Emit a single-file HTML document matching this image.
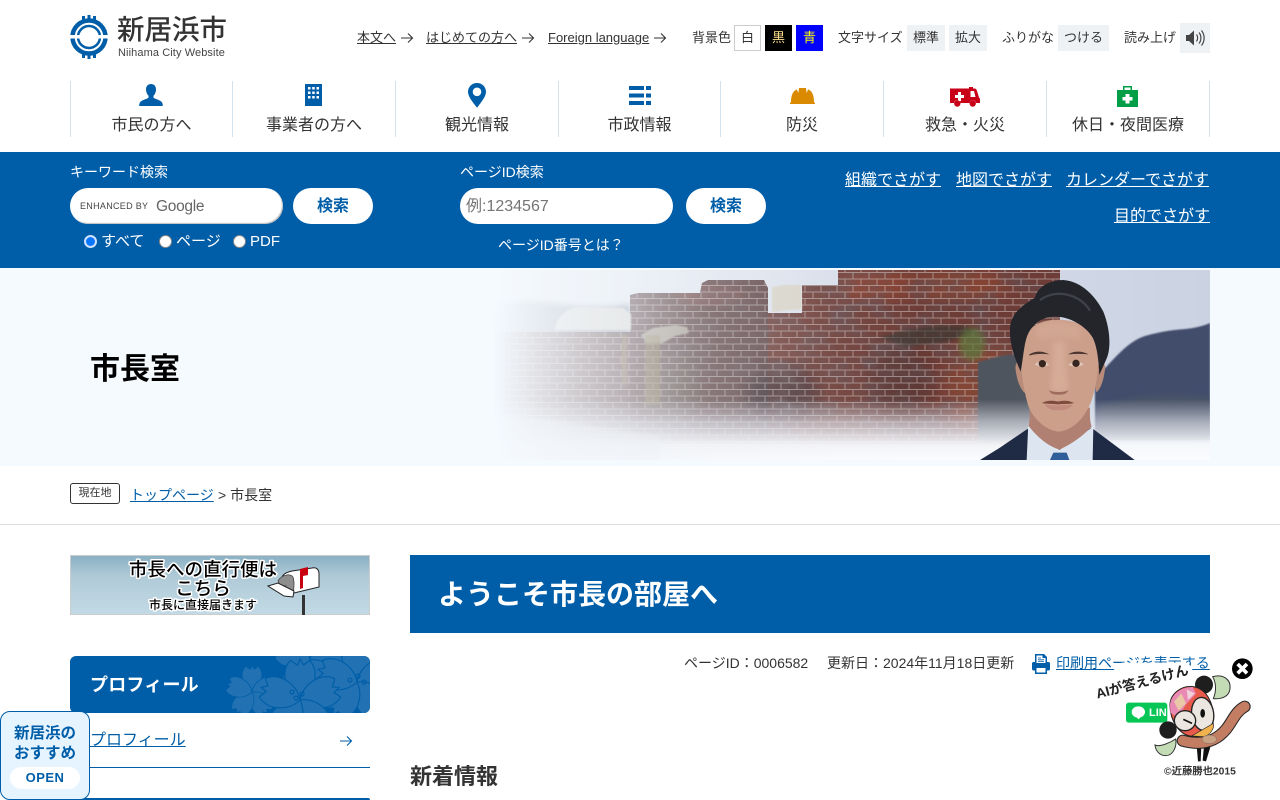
<!DOCTYPE html>
<html lang="ja"><head><meta charset="utf-8"><title>市長室 | 新居浜市</title>
<style>
html,body{margin:0;padding:0;background:#fff}
body{width:1280px;height:800px;overflow:hidden;position:relative;font-family:"Liberation Sans","Noto Sans CJK JP",sans-serif;color:#333}
.a{position:absolute}
.t{position:absolute;white-space:nowrap;line-height:1}
a{color:inherit}
.sep{position:absolute;top:81px;height:56px;width:1px;background:#d3e1ec}
.nav{position:absolute;top:117px;font-size:16px;line-height:18px;text-align:center;white-space:nowrap;color:#333}
.box{position:absolute;top:25px;height:26px;line-height:26px;text-align:center;font-size:13px;background:#eff2f5;color:#333}
.pill{position:absolute;background:#fff;border-radius:18px}
.btn{position:absolute;top:188px;height:36px;line-height:38px;width:80px;background:#fff;border-radius:18px;text-align:center;font-weight:bold;font-size:16px;color:#005ea8}
.radio{position:absolute;top:235px;width:13px;height:13px;border-radius:50%;background:#fff;box-sizing:border-box;border:1px solid #888}
svg{display:block}
</style></head><body>

<svg class="a" style="left:70px;top:15px" width="38" height="44" viewBox="0 0 38 44">
<circle cx="19" cy="22" r="16.500" fill="none" stroke="#005ea8" stroke-width="4.500"/>
<circle cx="19" cy="22" r="11" fill="none" stroke="#005ea8" stroke-width="2.500"/>
<path d="M12 1h3v6h-3zM17.500 0h3v7h-3zM23 1h3v6h-3zM12 37h3v6h-3zM17.500 37h3v7h-3zM23 37h3v6h-3z" fill="#005ea8"/>
<path d="M0 20h10v3.500H0zM28 20h10v3.500H28z" fill="#fff"/>
</svg>
<div class="t" style="left:117px;top:16px;font-size:27.500px;font-weight:500;color:#333">新居浜市</div>
<div class="t" style="left:118px;top:48px;font-size:11px;color:#444;letter-spacing:.1px">Niihama City Website</div>

<div class="t" style="left:357px;top:31px;font-size:13px"><a href="#">本文へ</a></div>
<svg class="a" style="left:401px;top:32px" width="13" height="12" viewBox="0 0 13 12"><path d="M0 6h11.500M7 1.500 11.500 6 7 10.500" fill="none" stroke="#333" stroke-width="1.100"/></svg>
<div class="t" style="left:426px;top:31px;font-size:13px"><a href="#">はじめての方へ</a></div>
<svg class="a" style="left:522px;top:32px" width="13" height="12" viewBox="0 0 13 12"><path d="M0 6h11.500M7 1.500 11.500 6 7 10.500" fill="none" stroke="#333" stroke-width="1.100"/></svg>
<div class="t" style="left:548px;top:31px;font-size:13px"><a href="#">Foreign language</a></div>
<svg class="a" style="left:654px;top:32px" width="13" height="12" viewBox="0 0 13 12"><path d="M0 6h11.500M7 1.500 11.500 6 7 10.500" fill="none" stroke="#333" stroke-width="1.100"/></svg>

<div class="t" style="left:692px;top:31px;font-size:13px">背景色</div>
<div class="box" style="left:734px;width:25px;height:24px;line-height:24px;background:#fff;border:1px solid #ccc">白</div>
<div class="box" style="left:765px;width:27px;background:#000;color:#ffe08a">黒</div>
<div class="box" style="left:796px;width:27px;background:#00f;color:#ff0">青</div>
<div class="t" style="left:838px;top:31px;font-size:13px">文字サイズ</div>
<div class="box" style="left:907px;width:38px">標準</div>
<div class="box" style="left:949px;width:38px">拡大</div>
<div class="t" style="left:1002px;top:31px;font-size:13px">ふりがな</div>
<div class="box" style="left:1058px;width:51px">つける</div>
<div class="t" style="left:1124px;top:31px;font-size:13px">読み上げ</div>
<div class="a" style="left:1180px;top:23px;width:30px;height:30px;background:#eff2f5"></div>
<svg class="a" style="left:1185px;top:28px" width="20" height="20" viewBox="0 0 20 20"><path d="M1 7h3l5-4.500v15L4 13H1z" fill="#444"/><path d="M11.500 6.500c1.500 2 1.500 5 0 7M14 4.500c2.500 3 2.500 8 0 11M16.500 2.500c3.500 4.500 3.500 10.500 0 15" fill="none" stroke="#444" stroke-width="1.200"/></svg>

<div class="sep" style="left:70px"></div><div class="sep" style="left:232px"></div><div class="sep" style="left:395px"></div><div class="sep" style="left:558px"></div><div class="sep" style="left:720px"></div><div class="sep" style="left:883px"></div><div class="sep" style="left:1046px"></div><div class="sep" style="left:1209px"></div>

<svg class="a" style="left:139px;top:84px" width="24" height="22" viewBox="0 0 24 22"><path d="M12 0c3.500 0 5 2.600 5 5.500 0 2.500-1 4.800-2.500 6.200v1.800c0 1 5.200 2 8 4.200.9.800 1.300 2.300 1.300 4.300H.2c0-2 .4-3.500 1.300-4.300 2.800-2.200 8-3.200 8-4.200v-1.800C8 10.300 7 8 7 5.500 7 2.600 8.500 0 12 0z" fill="#005ea8"/></svg>
<svg class="a" style="left:305px;top:84px" width="17" height="22" viewBox="0 0 17 22"><path fill-rule="evenodd" d="M0 0h17v22H0zM3 3v2.500h2.500V3zM7.200 3v2.500h2.500V3zM11.500 3v2.500H14V3zM3 7.500V10h2.500V7.500zM7.200 7.500V10h2.500V7.500zM11.500 7.500V10H14V7.500zM3 12v2.500h2.500V12zM7.200 12v2.500h2.500V12zM11.500 12v2.500H14V12z" fill="#005ea8"/></svg>
<svg class="a" style="left:468px;top:83px" width="18" height="25" viewBox="0 0 18 25"><path fill-rule="evenodd" d="M9 0c5 0 9 3.900 9 8.800 0 5-5 10.700-9 16-4-5.300-9-11-9-16C0 3.900 4 0 9 0zm0 4.500a4.300 4.300 0 1 0 0 8.600 4.300 4.300 0 0 0 0-8.600z" fill="#005ea8"/></svg>
<svg class="a" style="left:629px;top:86px" width="22" height="19" viewBox="0 0 22 19"><path d="M0 0h15v4H0zM17 0h5v4h-5zM0 7.500h15v4H0zM17 7.500h5v4h-5zM0 15h15v4H0zM17 15h5v4h-5z" fill="#005ea8"/></svg>
<svg class="a" style="left:790px;top:88px" width="25" height="16" viewBox="0 0 25 16"><path d="M9 0h7l.6 5 1.600-3.600C22 3 24 7 24 14l1 1v1H0v-1l1-1C1 7 3 3 6.800 1.400L8.400 5z" fill="#d98a00"/></svg>
<svg class="a" style="left:950px;top:86px" width="30" height="21" viewBox="0 0 30 21"><path d="M0 2.500h19V1h4v1.500h1.500c1.500 0 2 1 2.500 2.500l2 6.500c.6.500 1 1.200 1 2V17h-4a3.300 3.300 0 0 0-6.500 0h-9A3.300 3.300 0 0 0 4 17H0z" fill="#c80018"/><path d="M20.500 5h3.500l1.500 6h-5z" fill="#fff"/><path d="M8 6h3v3h3v3h-3v3H8v-3H5V9h3z" fill="#fff"/><circle cx="7.300" cy="17.500" r="3.200" fill="#c80018"/><circle cx="22.700" cy="17.500" r="3.200" fill="#c80018"/></svg>
<svg class="a" style="left:1117px;top:86px" width="21" height="21" viewBox="0 0 21 21"><path fill-rule="evenodd" d="M6 4V0h9v4h6v17H0V4zM7.500 1.500V4h6V1.500z" fill="#009e47"/><path d="M8.500 8h4v3h3v3.500h-3v3h-4v-3h-3V11h3z" fill="#fff"/></svg>

<div class="nav" style="left:71px;width:161px">市民の方へ</div>
<div class="nav" style="left:233px;width:162px">事業者の方へ</div>
<div class="nav" style="left:396px;width:162px">観光情報</div>
<div class="nav" style="left:559px;width:161px">市政情報</div>
<div class="nav" style="left:721px;width:162px">防災</div>
<div class="nav" style="left:884px;width:162px">救急・火災</div>
<div class="nav" style="left:1047px;width:162px">休日・夜間医療</div>

<div class="a" style="left:0;top:152px;width:1280px;height:116px;background:#005ea8"></div>
<div class="t" style="left:70px;top:165px;font-size:14px;color:#fff">キーワード検索</div>
<div class="pill" style="left:70px;top:188px;width:213px;height:36px;box-shadow:inset -1px -1px 1px #bbb"></div>
<div class="t" style="left:80px;top:202px;font-size:9px;color:#444;letter-spacing:.3px">ENHANCED BY</div>
<div class="t" style="left:156px;top:199px;font-size:15.500px;color:#666;letter-spacing:-.3px">Google</div>
<div class="btn" style="left:293px">検索</div>
<div class="radio" style="left:84px;background:#fff;border:2px solid #cfe2ff"><div class="a" style="left:0;top:0;width:9px;height:9px;border-radius:50%;background:#0a75ff"></div></div>
<div class="t" style="left:101px;top:234px;font-size:15px;color:#fff">すべて</div>
<div class="radio" style="left:159px"></div>
<div class="t" style="left:176px;top:234px;font-size:15px;color:#fff">ページ</div>
<div class="radio" style="left:233px"></div>
<div class="t" style="left:250px;top:234px;font-size:15px;color:#fff">PDF</div>

<div class="t" style="left:460px;top:165px;font-size:14px;color:#fff">ページID検索</div>
<div class="pill" style="left:460px;top:188px;width:213px;height:36px"></div>
<div class="t" style="left:466px;top:199px;font-size:16px;color:#757575">例:1234567</div>
<div class="btn" style="left:686px">検索</div>
<div class="t" style="left:498px;top:238px;font-size:14px;color:#fff">ページID番号とは？</div>

<div class="t" style="left:845px;top:173px;font-size:16px;color:#fff"><a href="#">組織でさがす</a></div>
<div class="t" style="left:956px;top:173px;font-size:16px;color:#fff"><a href="#">地図でさがす</a></div>
<div class="t" style="left:1066px;top:173px;font-size:16px;color:#fff"><a href="#">カレンダーでさがす</a></div>
<div class="t" style="left:1114px;top:209px;font-size:16px;color:#fff"><a href="#">目的でさがす</a></div>

<div class="a" style="left:0;top:268px;width:1280px;height:198px;background:#f5faff"></div>
<svg class="a" style="left:380px;top:270px" width="830" height="190" viewBox="380 270 830 190">
<defs>
<linearGradient id="sky" x1="0" x2="1" y1="0" y2="0"><stop offset="0" stop-color="#f5faff"/><stop offset=".3" stop-color="#e9eef5"/><stop offset=".6" stop-color="#d5dbe8"/><stop offset="1" stop-color="#cbd3e3"/></linearGradient>
<pattern id="mt" width="16" height="13" patternUnits="userSpaceOnUse"><path d="M0 6h16M0 12.500h16M5 0v6M13 6v7" stroke="#cfc6c4" stroke-width="1" opacity=".55" fill="none"/></pattern>
<linearGradient id="fadeL" x1="0" x2="1" y1="0" y2="0"><stop offset="0" stop-color="#f5faff"/><stop offset=".135" stop-color="#f5faff"/><stop offset=".2" stop-color="#f3f7fb" stop-opacity=".85"/><stop offset=".3" stop-color="#f0f4f9" stop-opacity=".6"/><stop offset=".4" stop-color="#eef1f6" stop-opacity=".3"/><stop offset=".55" stop-color="#eef1f6" stop-opacity=".08"/><stop offset=".65" stop-color="#eef1f6" stop-opacity="0"/></linearGradient>
<linearGradient id="fadeB" x1="0" x2="0" y1="0" y2="1"><stop offset=".68" stop-color="#dfe2ec" stop-opacity="0"/><stop offset=".8" stop-color="#e3e6ef" stop-opacity=".62"/><stop offset=".92" stop-color="#f6f8fb" stop-opacity=".97"/><stop offset="1" stop-color="#fafcff"/></linearGradient>
<filter id="b3"><feGaussianBlur stdDeviation="3"/></filter>
<filter id="b8"><feGaussianBlur stdDeviation="9"/></filter>
<filter id="b1"><feGaussianBlur stdDeviation=".8"/></filter>
<filter id="b2"><feGaussianBlur stdDeviation="1.600"/></filter>
<filter id="nz" x="0" y="0" width="1" height="1"><feTurbulence type="fractalNoise" baseFrequency=".035 .05" numOctaves="4" seed="7"/><feColorMatrix values="0 0 0 0 .12  0 0 0 0 .08  0 0 0 0 .09  1.600 0 0 0 -.65"/></filter>
<clipPath id="wc"><path d="M490 460V332h140V295l8-2h62l2-10 6-3h56l4 8v25h34v-28h36v-15h222v190z"/></clipPath>
</defs>
<rect x="380" y="270" width="830" height="190" fill="url(#sky)"/>
<path d="M400 340c30-25 100-42 140-38 30 3 60 8 90 2v50H400z" fill="#9ea4b3" filter="url(#b3)"/>
<path d="M1095 440V378c14-12 30-36 50-42 18-5 28-6 40-7 10-1 18-3 25-6v117z" fill="#434d6c" filter="url(#b1)"/>
<path d="M1100 440v-34c30-10 70-14 110-8v42z" fill="#4f5a66" opacity=".6" filter="url(#b3)"/>
<g clip-path="url(#wc)">
<rect x="490" y="330" width="140" height="130" fill="#64484a"/>
<rect x="630" y="275" width="138" height="185" fill="#5c4243"/>
<rect x="768" y="270" width="300" height="190" fill="#6e3c36"/>
<ellipse cx="670" cy="385" rx="26" ry="35" fill="#5b5a4e" opacity=".5" filter="url(#b8)"/>
<ellipse cx="782" cy="395" rx="36" ry="30" fill="#2e282e" opacity=".6" filter="url(#b8)"/>
<ellipse cx="710" cy="295" rx="34" ry="10" fill="#7a4a44" opacity=".6" filter="url(#b3)"/>
<ellipse cx="875" cy="285" rx="40" ry="15" fill="#96422f" opacity=".7" filter="url(#b8)"/>
<ellipse cx="960" cy="285" rx="50" ry="14" fill="#9b4b33" opacity=".6" filter="url(#b8)"/>
<ellipse cx="985" cy="385" rx="40" ry="45" fill="#964f38" opacity=".55" filter="url(#b8)"/>
<ellipse cx="900" cy="380" rx="30" ry="40" fill="#4a3434" opacity=".45" filter="url(#b8)"/>
<rect x="490" y="270" width="580" height="190" filter="url(#nz)"/>
<rect x="490" y="270" width="580" height="190" fill="url(#mt)"/>
</g>
<path d="M555 330c2-14 12-24 30-23l38 1 8 6v16z" fill="#d9d8d2" filter="url(#b1)"/>
<path d="M772 287l12-2h17l1 24-30 3z" fill="#d8d4c8" filter="url(#b1)"/>
<path d="M641 335l12-7 22-3 12 2 2 6-14 3-12 7-16 0z" fill="#a59d92" filter="url(#b1)"/>
<path d="M622 335h5v50h-5zM645 335h15v70h-15z" fill="#8a7b50" opacity=".5" filter="url(#b1)"/>
<path d="M880 338c20-8 50-14 85-12l12 6-30 10-40 4z" fill="#3a3830" opacity=".65" filter="url(#b2)"/>
<ellipse cx="972" cy="344" rx="13" ry="16" fill="#5d7a3c" opacity=".7" filter="url(#b3)"/>
<path d="M978 362l22-6 34-3v90h-56z" fill="#50545f" filter="url(#b1)"/>
<rect x="380" y="270" width="830" height="190" fill="url(#fadeB)"/>
<path d="M480 415l70 5 110 16v24H480z" fill="#e9ecf2" opacity=".4" filter="url(#b2)"/>
<rect x="380" y="270" width="830" height="190" fill="url(#fadeL)"/>
<g transform="translate(1000 275) scale(.33333)">
<path d="M-60 555 0 518 82 462 178 520 274 458 404 555z" fill="#1f2a45"/>
<path d="M85 445 80 555H278L280 455 178 525z" fill="#dde6f0"/>
<path d="M150 555 160 533H200L208 555z" fill="#2f5f99"/>
<path d="M88 400c2 22 2 40-3 52 28 36 60 62 93 72 42-20 72-42 97-70-5-12-6-30-5-56z" fill="#b08172"/>
<path d="M60 262c-12-4-16 8-12 30 4 26 12 48 26 62l14-40zM298 262c12-6 20 6 16 28-4 28-12 50-24 62l-12-40z" fill="#b98c7a"/>
<path d="M62 230c0 60 8 110 22 160 14 40 54 78 94 80 44-6 76-44 94-86 18-50 26-110 22-158-8-50-36-90-120-92-70 0-110 40-112 96z" fill="#cb9f8a"/>
<path d="M160 200c-2 40 2 80-8 128-2 18 10 26 26 26s30-8 26-26c-10-48-8-88-10-128z" fill="#deb5a0" opacity=".6" filter="url(#b8)"/>
<path d="M110 150c40-14 90-12 130 4v40c-40-10-90-10-128-2z" fill="#d5ab96" opacity=".7" filter="url(#b8)"/>
<path d="M88 238c20-12 42-10 60 0-20-2-42-2-60 4zM204 238c20-12 44-10 62 0-20-2-42-2-62 0z" fill="#4a362f"/>
<path d="M104 268c12-11 32-11 44 2-14 6-32 6-44-2zM205 270c12-12 34-13 46-2-12 8-32 9-46 2z" fill="#dfc8bb"/>
<circle cx="127" cy="266" r="11" fill="#35261f"/><circle cx="228" cy="265" r="11" fill="#35261f"/>
<path d="M146 345c10 8 50 8 60 0-6 12-14 14-30 14s-24-2-30-14z" fill="#9e6b5c"/>
<path d="M126 384c14-8 32-8 48-4 16-4 32-4 48 4-12 4-30 2-48 4-18-2-36 0-48-4z" fill="#7f4a3f"/>
<path d="M134 388c14 4 68 4 84 0-8 14-24 18-42 18s-34-4-42-18z" fill="#c28a7c"/>
<path d="M62 290C45 250 28 210 30 160 32 120 60 95 105 68 112 35 150 15 190 15 250 20 290 70 310 110 330 160 335 220 318 255L298 300C296 260 292 215 278 188 262 160 220 128 170 125 130 122 100 145 85 175 72 200 70 250 62 290z" fill="#23252b"/>
<path d="M120 75c50-35 120-18 150 32" stroke="#4c4f57" stroke-width="7" fill="none" opacity=".7"/>
</g>
</svg>
<div class="t" style="left:90px;top:355px;font-size:30px;font-weight:bold;color:#000">市長室</div>

<div class="a" style="left:70px;top:483px;width:48px;height:19px;border:1px solid #333;border-radius:3px;font-size:11px;line-height:19px;text-align:center">現在地</div>
<div class="t" style="left:130px;top:488px;font-size:14px;color:#005ea8"><a href="#">トップページ</a></div>
<div class="t" style="left:218px;top:488px;font-size:14px">&gt; 市長室</div>
<div class="a" style="left:0;top:524px;width:1280px;height:1px;background:#ddd"></div>

<svg class="a" style="left:70px;top:555px" width="300" height="60" viewBox="0 0 300 60">
<defs>
<linearGradient id="bn" x1="0" x2="0" y1="0" y2="1"><stop offset="0" stop-color="#89b0c3"/><stop offset=".35" stop-color="#afcad7"/><stop offset="1" stop-color="#c2dae5"/></linearGradient>
</defs>
<rect x=".5" y=".5" width="299" height="59" fill="url(#bn)" stroke="#ccc"/>
<g font-family="Liberation Sans,Noto Sans CJK JP,sans-serif" text-anchor="middle" fill="#000" stroke="#fff" stroke-width="3" paint-order="stroke" stroke-linejoin="round">
<text x="133" y="21" font-size="18.500" font-weight="500">市長への直行便は</text>
<text x="133" y="40" font-size="18.500" font-weight="500">こちら</text>
<text x="133" y="54" font-size="12" font-weight="500">市長に直接届きます</text>
</g>
<rect x="232" y="40" width="3" height="20" fill="#333"/>
<path d="M212 22c2-4 6-5 10-6l20-3c5-1 7 2 7 6v13l-25 6-12-3z" fill="#fff" stroke="#222" stroke-width="1"/>
<path d="M208 26c3-6 12-8 15-4 2 5 1 12 0 18l-6-2-1-7-6-1z" fill="#8e8e8e" stroke="#222" stroke-width=".6"/>
<path d="M198 31l10-3 16 8-1 6-9-1z" fill="#fff" stroke="#222" stroke-width="1"/>
<path d="M230 14l8-2v8l-5 1v12l-3 1z" fill="#c8000f"/>
</svg>

<div class="a" style="left:70px;top:656px;width:300px;height:57px;background:#005ea8;border-radius:6px;overflow:hidden">
<svg width="300" height="57" viewBox="0 0 300 57">
<defs>
<g id="fl"><g id="pt"><path d="M0 0C-12-6-17-24-8-33L-2-29 0-34 3-29 8-33C17-24 12-6 0 0z"/></g>
<use href="#pt" transform="rotate(72)"/><use href="#pt" transform="rotate(144)"/><use href="#pt" transform="rotate(216)"/><use href="#pt" transform="rotate(288)"/></g>
</defs>
<g fill="#2272b3" stroke="#005ea8" stroke-width="1">
<use href="#fl" transform="translate(182 36) scale(.78)"/>
<use href="#fl" transform="translate(240 4) scale(1.050)"/>
<use href="#fl" transform="translate(287 26) scale(1.200)"/>
<use href="#fl" transform="translate(230 44) scale(1.200)"/>
</g>
<g fill="none" stroke="#005ea8" stroke-width="1.200"><circle cx="226" cy="42" r="2"/><circle cx="232" cy="38" r="2"/><circle cx="222" cy="36" r="2"/><circle cx="280" cy="24" r="2"/><circle cx="288" cy="20" r="2"/><circle cx="294" cy="26" r="2"/></g>
</svg></div>
<div class="t" style="left:90px;top:676px;font-size:18px;font-weight:bold;color:#fff;letter-spacing:.2px">プロフィール</div>
<div class="t" style="left:90px;top:733px;font-size:16px;color:#005ea8"><a href="#">プロフィール</a></div>
<svg class="a" style="left:340px;top:735px" width="13" height="12" viewBox="0 0 13 12"><path d="M0 6h11.500M7 1.500 11.500 6 7 10.500" fill="none" stroke="#005ea8" stroke-width="1.100"/></svg>
<div class="a" style="left:70px;top:767px;width:300px;height:1px;background:#005ea8"></div>
<div class="a" style="left:70px;top:798px;width:300px;height:2px;background:#005ea8;border-radius:3px 3px 0 0"></div>

<div class="a" style="left:410px;top:555px;width:800px;height:78px;background:#005ea8"></div>
<div class="t" style="left:438px;top:581px;font-size:28px;font-weight:bold;color:#fff">ようこそ市長の部屋へ</div>

<div class="t" style="left:684px;top:656px;font-size:14px">ページID：0006582</div>
<div class="t" style="left:827px;top:656px;font-size:14px">更新日：2024年11月18日更新</div>
<svg class="a" style="left:1032px;top:654px" width="18" height="20" viewBox="0 0 18 20"><path fill-rule="evenodd" d="M3 0h9l3 3v5h1.500c.8 0 1.500.7 1.500 1.500V15c0 .8-.7 1.500-1.500 1.500H15V20H3v-3.500H1.500C.7 16.500 0 15.800 0 15V9.500C0 8.700.7 8 1.500 8H3zM4.500 1.500V9h9V4h-3V1.500zM4.500 14v4.500h9V14z" fill="#005ea8"/><path d="M6 4h3M6 5.800h6M6 7.400h6" stroke="#005ea8" stroke-width=".8"/></svg>
<div class="t" style="left:1056px;top:656px;font-size:14px;color:#005ea8"><a href="#">印刷用ページを表示する</a></div>

<div class="t" style="left:410px;top:766px;font-size:22px;font-weight:bold">新着情報</div>

<div class="a" style="left:0;top:711px;width:88px;height:87px;background:#e6f4ff;border:1px solid #005ea8;border-radius:10px"></div>
<div class="a" style="left:0;top:724px;width:90px;text-align:center;font-size:15.500px;line-height:20px;font-weight:bold;color:#005ea8">新居浜の<br>おすすめ</div>
<div class="a" style="left:10px;top:767px;width:70px;height:22px;background:#fff;border-radius:11px;text-align:center;font-size:13px;line-height:22px;font-weight:bold;color:#005ea8;letter-spacing:.5px">OPEN</div>

<svg class="a" style="left:1020px;top:640px" width="240" height="150" viewBox="0 0 720 450">
<path d="M215 150 305 68H505L540 130 480 172 220 212z" fill="#fff"/>
<rect x="318" y="188" width="124" height="60" rx="8" fill="#06c755"/>
<ellipse cx="355" cy="216" rx="20" ry="17" fill="#fff"/><path d="M348 230l8 8 6-8z" fill="#fff"/>
<text x="387" y="228" font-family="Liberation Sans,sans-serif" font-size="33" font-weight="bold" fill="#fff">LINE</text>
<text transform="translate(232 176) rotate(-15)" font-family="Liberation Sans,Noto Sans CJK JP,sans-serif" font-size="41" font-weight="bold" fill="#222">AIが答えるけん</text>
<path d="M578 110c30-8 55 6 52 36-2 24-26 32-50 30 8-20 10-44-2-66z" fill="#c4dcb6" stroke="#333" stroke-width="3"/>
<path d="M405 315c15 8 50-10 62-18 4 20-6 50-30 50-18 0-30-14-32-32z" fill="#c4dcb6" stroke="#333" stroke-width="3"/>
<path d="M530 318h14l-2 46-8 0zM552 318h20l-14 46-10-2z" fill="#111"/>
<path d="M488 302C540 316 585 308 618 268 638 244 645 216 674 200" fill="none" stroke="#222" stroke-width="36" stroke-linecap="round"/>
<path d="M488 302C540 316 585 308 618 268 638 244 645 216 674 200" fill="none" stroke="#c27d62" stroke-width="30" stroke-linecap="round"/>
<circle cx="552" cy="134" r="27" fill="#1e1e1e"/>
<circle cx="444" cy="270" r="26" fill="#1e1e1e"/>
<path d="M450 195c0-32 32-60 70-55 42 8 62 52 60 97-1 32-22 53-58 53-46-2-72-50-72-95z" fill="#e85a4b" stroke="#222" stroke-width="3"/>
<path d="M450 195c2-30 32-54 68-54l10 20-30 32-25 40-22-15z" fill="#e88ab4"/>
<path d="M462 185l22-25 14 30-22 22z" fill="#e9c8a8"/>
<path d="M500 148l24 12-20 20z" fill="#f0d2d8"/>
<ellipse cx="548" cy="222" rx="33" ry="50" transform="rotate(-8 548 222)" fill="#ece6e0" stroke="#222" stroke-width="4"/>
<ellipse cx="495" cy="242" rx="32" ry="30" fill="#ece6e0" stroke="#222" stroke-width="4"/>
<ellipse cx="548" cy="220" rx="7" ry="13" fill="#111"/>
<path d="M490 238l26 12" stroke="#111" stroke-width="5"/>
<path d="M515 288l65-38c4 14-8 34-28 40z" fill="#efb24c" stroke="#222" stroke-width="2"/>
<ellipse cx="568" cy="298" rx="22" ry="13" fill="#c9a183" stroke="#555"/>
<text x="432" y="403" font-family="Liberation Sans,Noto Sans CJK JP,sans-serif" font-size="31" font-weight="bold" fill="#333">©近藤勝也2015</text>
<circle cx="667" cy="86" r="31" fill="#000"/>
<path d="M653 72l28 28M681 72l-28 28" stroke="#fff" stroke-width="11"/>
</svg>
</body></html>
